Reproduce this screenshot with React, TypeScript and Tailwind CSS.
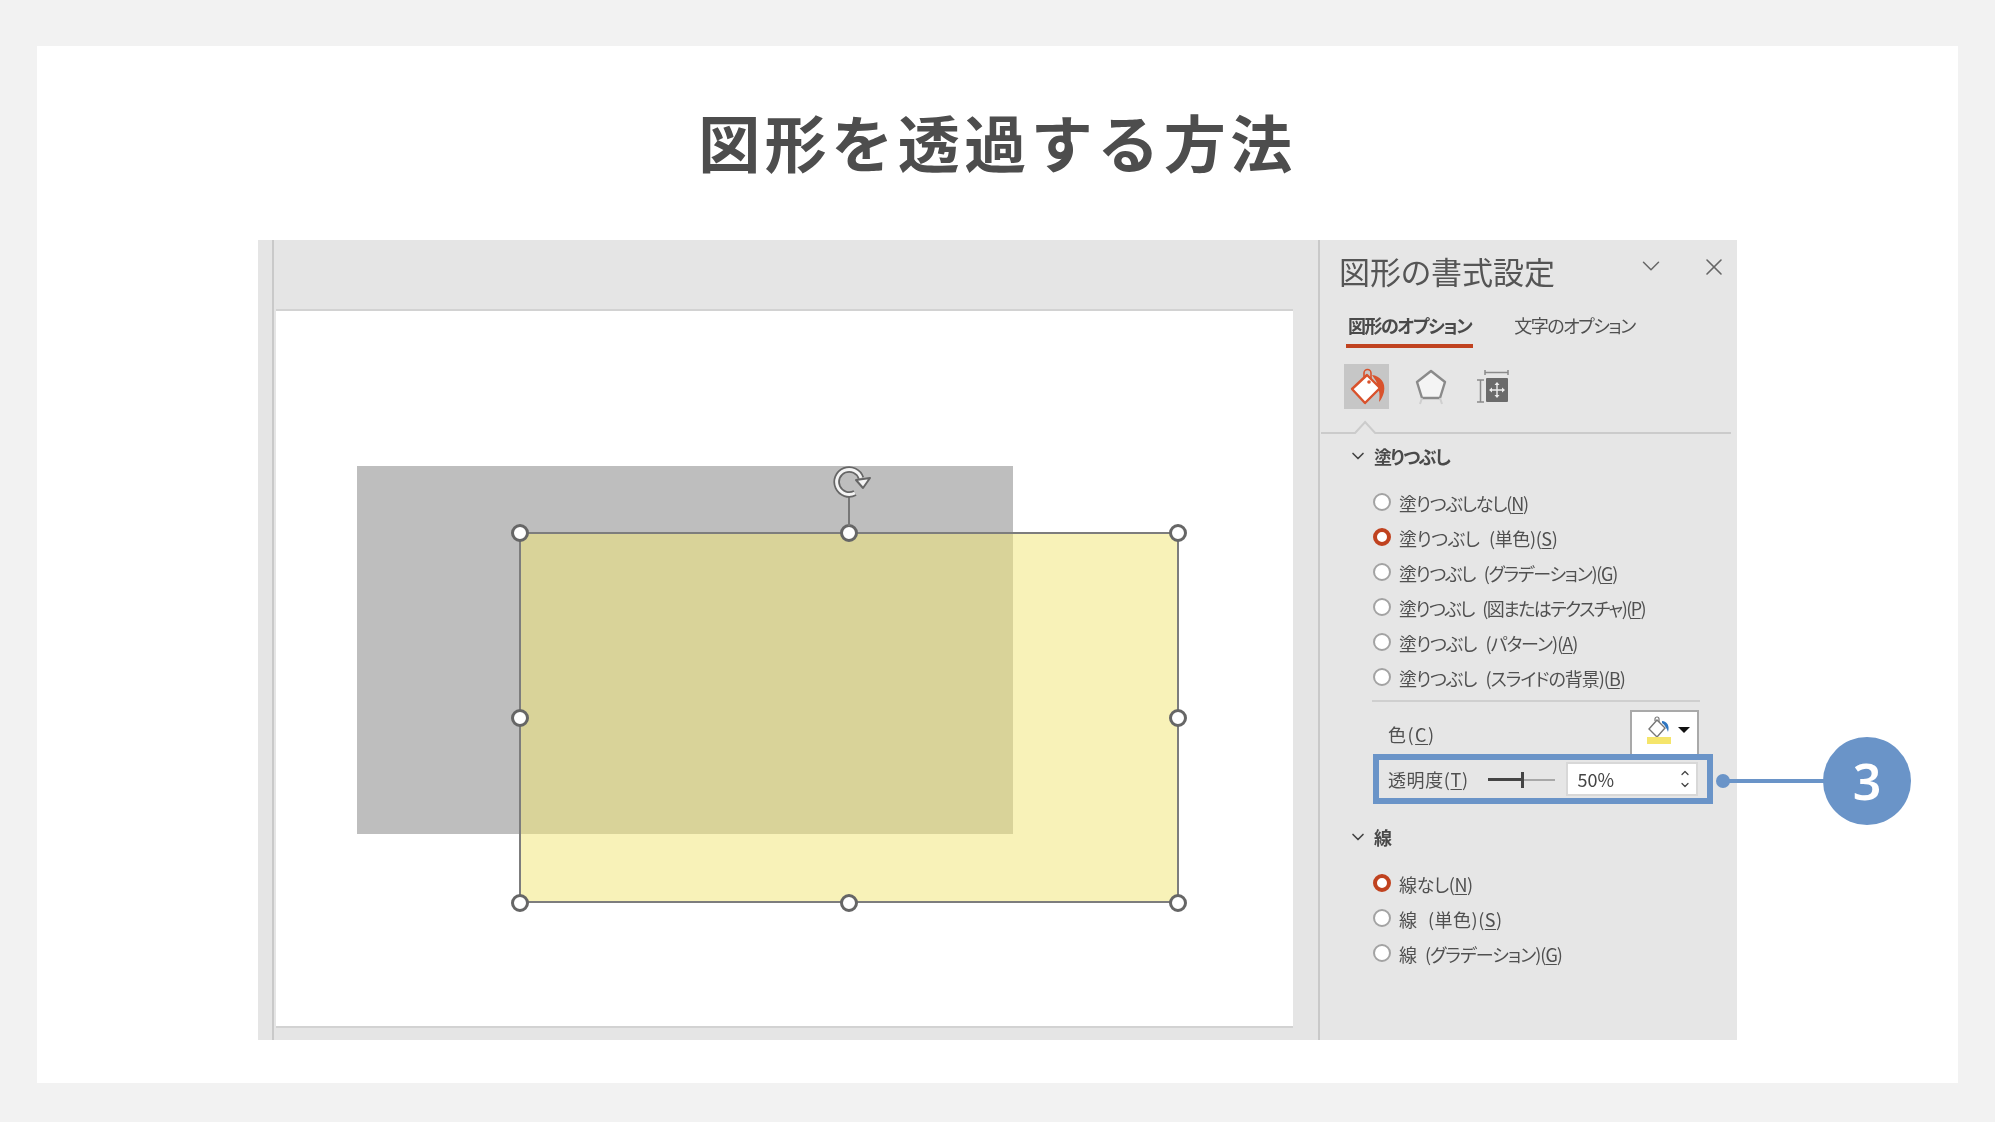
import { ChevronDown, X } from 'lucide-react';

const fillOptions = [
  { label: '塗りつぶしなし', key: 'N', track: 'tracking-[-1.15px]' },
  { label: '塗りつぶし (単色)', key: 'S', track: 'tracking-[-0.4px]', checked: true },
  { label: '塗りつぶし (グラデーション)', key: 'G', track: 'tracking-[-1.3px]' },
  { label: '塗りつぶし (図またはテクスチャ)', key: 'P', track: 'tracking-[-1.55px]' },
  { label: '塗りつぶし (パターン)', key: 'A', track: 'tracking-[-1px]' },
  { label: '塗りつぶし (スライドの背景)', key: 'B', track: 'tracking-[-1px]' },
];

const lineOptions = [
  { label: '線なし', key: 'N', track: 'tracking-[-0.4px]', checked: true },
  { label: '線 (単色)', key: 'S', track: 'tracking-[0.5px]' },
  { label: '線 (グラデーション)', key: 'G', track: 'tracking-[-1px]' },
];

const handles = [
  'left-[-10px] top-[-10px]',
  'left-[319px] top-[-10px]',
  'left-[648px] top-[-10px]',
  'left-[-10px] top-[175px]',
  'left-[648px] top-[175px]',
  'left-[-10px] top-[360px]',
  'left-[319px] top-[360px]',
  'left-[648px] top-[360px]',
];

function Radio({ label, hotkey, track, checked }: { label: string; hotkey: string; track: string; checked?: boolean }) {
  return (
    <div className="flex h-[35px] items-center">
      {checked ? (
        <span className="h-[18px] w-[18px] rounded-full border-[4px] border-[#c0421f] bg-white" />
      ) : (
        <span className="h-[18px] w-[18px] rounded-full border-2 border-[#a3a3a3] bg-white" />
      )}
      <span className={`ml-[8px] mt-[2px] text-[18px] leading-none text-[#505050] [word-spacing:6px] ${track}`}>
        {label}(<span className="underline underline-offset-2">{hotkey}</span>)
      </span>
    </div>
  );
}

function SectionHeading({ title }: { title: string }) {
  return (
    <div className="flex h-[26px] items-center pl-[28px]">
      <ChevronDown className="h-[20px] w-[20px] text-[#444]" strokeWidth={2} />
      <span className="ml-[6px] text-[18px] font-bold leading-none tracking-[-1.5px] text-[#4a4a4a]">{title}</span>
    </div>
  );
}

function BucketIcon() {
  return (
    <svg width="38" height="38" viewBox="0 0 38 38">
      <path d="M16 9 V5 a3.5 3.5 0 0 1 7 0 V13" fill="none" stroke="#d9522c" strokeWidth="1.6" />
      <path d="M19 7 L4 21 L17 35 L32 20 Z" fill="#fff" stroke="#d9522c" strokeWidth="2.4" strokeLinejoin="round" />
      <circle cx="21" cy="14" r="1.8" fill="#d9522c" />
      <path d="M24 7 C32 8 38 14 36 24 C35 28 33 32 31 34 C32 28 32 23 28 13 Z" fill="#d9522c" />
    </svg>
  );
}

function PentagonIcon() {
  return (
    <svg width="36" height="40" viewBox="0 0 36 40">
      <path d="M18 4 L32 15 L27 31 H9 L4 15 Z" fill="#f4f4f4" stroke="#8a8a8a" strokeWidth="2.400" strokeLinejoin="round" />
      <path d="M7 37 L9 31 M29 37 L27 31" stroke="#cfcfcf" strokeWidth="2" />
    </svg>
  );
}

function SizeIcon() {
  return (
    <svg width="36" height="38" viewBox="0 0 36 38">
      <path d="M10 2 V7 M33 2 V7 M10 4.5 H33 M2 12 H9 M2 34 H9 M5.5 12 V34" fill="none" stroke="#8a8a8a" strokeWidth="1.5" />
      <rect x="11" y="10" width="22" height="24" rx="1" fill="#6b6b6b" />
      <path d="M22 17 V27 M17 22 H27" stroke="#eee" strokeWidth="1.400" />
      <path d="M19.500 17 L22 14 L24.500 17 Z M19.500 27 L22 30 L24.500 27 Z M17 19.500 L14 22 L17 24.500 Z M27 19.500 L30 22 L27 24.500 Z" fill="#eee" />
    </svg>
  );
}

function RotateIcon() {
  return (
    <svg width="42" height="36" viewBox="0 0 42 36">
      <path d="M23 29 A12.500 12.500 0 1 1 29 14" fill="none" stroke="#666" strokeWidth="6.500" />
      <path d="M23 29 A12.500 12.500 0 1 1 29 14" fill="none" stroke="#f4f4f4" strokeWidth="3" />
      <path d="M24 16 L38 14 L31 24 Z" fill="#f4f4f4" stroke="#666" strokeWidth="2" strokeLinejoin="round" />
    </svg>
  );
}

function SmallBucket() {
  return (
    <svg width="26" height="28" viewBox="0 0 26 28">
      <path d="M8 5 V3 a2 2 0 0 1 4 0 V8" fill="none" stroke="#777" strokeWidth="1.2" />
      <path d="M10 4 L2 13 L10 21 L18 12 Z" fill="#fff" stroke="#777" strokeWidth="1.4" />
      <path d="M15 5 C20 5 23 10 21 16 C20 13 18 9 15 7 Z" fill="#2f76c0" />
      <rect x="0" y="21" width="24" height="7" fill="#f5e56b" />
    </svg>
  );
}

export default function App() {
  return (
    <div className="h-[1122px] bg-[#f2f2f2] px-[37px] pt-[46px] font-['Noto_Sans_CJK_JP',sans-serif]">
      <div className="flex h-[1037px] flex-col items-center bg-white">
        <h1 className="mt-[58px] h-[136px] text-[62px] font-bold leading-[74px] tracking-[4.5px] text-[#4d4d4d]">
          図形を透過する方法
        </h1>

        <div className="relative flex h-[800px] w-[1479px]">
          <div className="flex flex-1 bg-[#e5e5e5] blur-[0.4px]">
            <div className="w-[14px] border-r-2 border-[#c9c9c9] box-content" />
            <div className="flex flex-1 flex-col pl-[2px] pr-[25px]">
              <div className="h-[71px] border-b-2 border-[#d2d2d2]" />
              <div className="relative h-[717px] border-b-2 border-[#d2d2d2] bg-white">
                <div className="absolute left-[81px] top-[155px] h-[368px] w-[656px] bg-[#bebebe]" />
                <div className="absolute left-[243px] top-[221px] h-[371px] w-[660px] border-2 border-[#7d7d7d] bg-[#f2e676]/[0.52]">
                  {handles.map((pos) => (
                    <span
                      key={pos}
                      className={`absolute h-[18px] w-[18px] rounded-full border-[3px] border-[#666] bg-white ${pos}`}
                    />
                  ))}
                  <span className="absolute left-[327px] top-[-40px] h-[32px] w-[2px] bg-[#777]" />
                  <span className="absolute left-[311px] top-[-70px]">
                    <RotateIcon />
                  </span>
                </div>
              </div>
            </div>
          </div>

          <aside className="flex w-[419px] flex-col border-l-2 border-[#c9c9c9] bg-[#e6e6e6] pt-[11px] text-[#505050] blur-[0.4px] [font-feature-settings:'palt']">
            <div className="flex items-start pl-[19px] pr-[9px]">
              <span className="text-[31px] leading-[40px] text-[#555] [font-feature-settings:'normal']">図形の書式設定</span>
              <ChevronDown className="ml-auto h-[30px] w-[30px] text-[#666]" strokeWidth={1.2} />
              <X className="ml-[34px] mt-[2px] h-[28px] w-[28px] text-[#666]" strokeWidth={1.4} />
            </div>

            <div className="mt-[17px] flex pl-[26px]">
              <div className="border-b-[4px] border-[#c0421f] px-[2px] pb-[7px] pt-[5px] text-[18px] font-bold leading-[24px] tracking-[-1.5px] text-[#4a4a4a]">
                図形のオプション
              </div>
              <div className="ml-[41px] pt-[5px] text-[18px] leading-[24px] tracking-[-1.5px]">文字のオプション</div>
            </div>

            <div className="mt-[16px] flex items-center pl-[24px]">
              <div className="flex h-[45px] w-[45px] items-center justify-center bg-[#c6c6c6]">
                <BucketIcon />
              </div>
              <div className="ml-[24px]">
                <PentagonIcon />
              </div>
              <div className="ml-[26px]">
                <SizeIcon />
              </div>
            </div>

            <div className="ml-[1px] mr-[6px] mt-[11px] h-[15px]">
              <svg className="block h-[15px] w-full" viewBox="0 0 409 15" preserveAspectRatio="none">
                <path d="M0 13 H34 L44 2 L54 13 H409" fill="none" stroke="#cbcbcb" strokeWidth="2" />
              </svg>
            </div>

            <div className="mt-[8px]">
              <SectionHeading title="塗りつぶし" />
            </div>

            <div className="mt-[15px] pl-[53px]">
              {fillOptions.map((o) => (
                <Radio key={o.key} label={o.label} hotkey={o.key} track={o.track} checked={o.checked} />
              ))}
            </div>

            <div className="ml-[52px] mr-[37px] mt-[6px] h-[2px] bg-[#cfcfcf]" />

            <div className="ml-[52px] mr-[38px] mt-[8px] flex h-[44px] items-start justify-between">
              <span className="ml-[16px] mt-[12px] text-[18px] leading-[24px] tracking-[1.5px]">
                色(<span className="underline underline-offset-2">C</span>)
              </span>
              <div className="flex h-[44px] w-[69px] items-start gap-[5px] border-2 border-b-0 border-[#a9a9a9] bg-white pl-[15px] pt-[4px]">
                <SmallBucket />
                <span className="mt-[11px] h-0 w-0 border-x-[6px] border-t-[6px] border-x-transparent border-t-[#111]" />
              </div>
            </div>

            <div className="ml-[53px] flex h-[50px] w-[340px] items-center border-[6px] border-[#6a94c8] pl-[9px]">
              <span className="text-[18px] leading-[24px] tracking-[0.6px]">
                透明度(<span className="underline underline-offset-2">T</span>)
              </span>
              <div className="relative ml-[19px] mt-[1px] h-[2px] w-[67px] bg-[#a8a8a8]">
                <span className="absolute left-0 top-[-1px] h-[3px] w-[34px] bg-[#444]" />
                <span className="absolute left-[33px] top-[-7px] h-[16px] w-[3px] bg-[#444]" />
              </div>
              <div className="ml-[11px] flex h-[34px] w-[132px] items-center justify-between border-2 border-[#d8d8d8] bg-white pl-[10px] pr-[5px]">
                <span className="text-[18px] leading-none text-[#444]">50%</span>
                <span className="flex flex-col">
                  <ChevronDown className="h-[12px] w-[12px] rotate-180 text-[#444]" strokeWidth={2.500} />
                  <ChevronDown className="h-[12px] w-[12px] text-[#444]" strokeWidth={2.500} />
                </span>
              </div>
            </div>

            <div className="mt-[20px]">
              <SectionHeading title="線" />
            </div>

            <div className="mt-[15px] pl-[53px]">
              {lineOptions.map((o) => (
                <Radio key={o.key} label={o.label} hotkey={o.key} track={o.track} checked={o.checked} />
              ))}
            </div>
          </aside>

          <div className="absolute left-[1458px] top-[497px] flex h-[88px] items-center">
            <span className="h-[14px] w-[14px] rounded-full bg-[#6a94c8]" />
            <span className="ml-[-2px] h-[4px] w-[97px] bg-[#6a94c8]" />
            <span className="ml-[-2px] flex h-[88px] w-[88px] items-center justify-center rounded-full bg-[#6a94c8] font-['Noto_Sans',sans-serif] text-[50px] font-semibold leading-none text-white">
              3
            </span>
          </div>
        </div>
      </div>
    </div>
  );
}
